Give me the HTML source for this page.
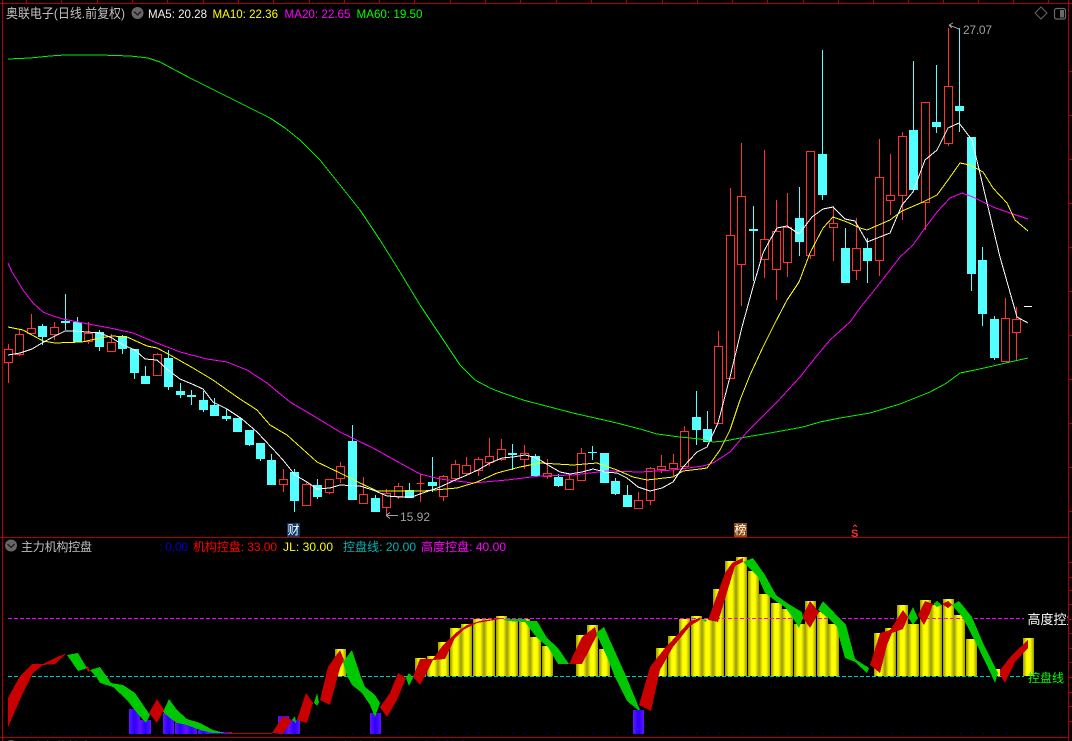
<!DOCTYPE html>
<html><head><meta charset="utf-8"><style>
html,body{margin:0;padding:0;background:#000;width:1072px;height:741px;overflow:hidden}
svg{display:block}
text{font-family:"Liberation Sans","Noto Sans CJK SC",sans-serif;font-size:12px}
</style></head><body>
<svg width="1072" height="741" viewBox="0 0 1072 741" xmlns="http://www.w3.org/2000/svg">
<defs>
<linearGradient id="y"><stop offset="0" stop-color="#989800"/><stop offset=".35" stop-color="#ff0"/><stop offset=".65" stop-color="#ff0"/><stop offset="1" stop-color="#989800"/></linearGradient>
<linearGradient id="b"><stop offset="0" stop-color="#6414ff"/><stop offset=".5" stop-color="#2800ff"/><stop offset="1" stop-color="#6414ff"/></linearGradient>
<clipPath id="rc"><rect x="0" y="600" width="1068" height="40"/></clipPath>
</defs>
<g shape-rendering="crispEdges">
<!-- frame -->
<path fill="none" stroke="#b00000" d="M2.5 0V741M0 3.5H1072M1068.5 0V741M0 537.5H1068M0 737.5H1068"/>
<path fill="none" stroke="#b00000" d="M26.5 0V3M61.5 0V3M97.5 0V3M132.5 0V3M167.5 0V3M203.5 0V3M238.5 0V3M273.5 0V3M309.5 0V3M344.5 0V3M379.5 0V3M414.5 0V3M450.5 0V3M485.5 0V3M520.5 0V3M556.5 0V3M591.5 0V3M626.5 0V3M662.5 0V3M697.5 0V3M732.5 0V3M767.5 0V3M803.5 0V3M838.5 0V3M873.5 0V3M908.5 0V3M943.5 0V3M978.5 0V3M1013.5 0V3M1048.5 0V3"/>
<path fill="none" stroke="#b00000" d="M1069 71.5h3M1069 115.5h3M1069 159.5h3M1069 203.5h3M1069 247.5h3M1069 291.5h3M1069 335.5h3M1069 379.5h3M1069 423.5h3M1069 467.5h3M1069 511.5h3M1069 562.5h3M1069 577.5h3M1069 590.5h3M1069 604.5h3M1069 619.5h3M1069 633.5h3M1069 648.5h3M1069 662.5h3M1069 677.5h3M1069 692.5h3M1069 706.5h3M1069 721.5h3"/>

<!-- candle wicks -->
<path fill="none" stroke="#ff3232" d="M8.5 344V383M19.5 329V356M31.5 314V335M54.5 322V340M88.5 322V344M111.5 334V351M157.5 353V375M283.5 469V492M306.5 482V506M329.5 479V494M340.5 462V483M363.5 477V503M386.5 489V515M398.5 483V499M420.5 474V502M443.5 475V501M455.5 460V481M466.5 457V476M478.5 457V476M489.5 438V466M501.5 439V461M524.5 445V469M547.5 459V479M569.5 474V490M581.5 448V480M638.5 492V508M650.5 467V505M661.5 455V473M673.5 454V476M684.5 426V466M718.5 331V423M730.5 188V378M741.5 143V306M764.5 150V278M776.5 200V300M787.5 193V277M810.5 151V259M833.5 206V261M856.5 218V280M879.5 139V276M890.5 154V215M902.5 132V220M925.5 102V230M948.5 28V146M1005.5 298V361M1016.5 307V361"/>
<path fill="none" stroke="#54ffff" d="M42.5 324V345M65.5 294V330M77.5 317V342M99.5 330V351M122.5 335V354M134.5 349V379M145.5 366V384M168.5 350V390M180.5 383V398M191.5 390V405M203.5 391V412M214.5 398V416M226.5 409V421M237.5 418V432M249.5 430V446M260.5 443V461M271.5 454V485M294.5 469V512M317.5 479V499M352.5 425V500M375.5 495V512M409.5 483V498M432.5 457V492M512.5 444V470M535.5 454V476M558.5 474V487M592.5 446V460M604.5 453V483M615.5 478V495M627.5 485V507M696.5 391V445M707.5 411V442M753.5 206V281M799.5 187V256M822.5 50V200M845.5 228V283M867.5 238V283M913.5 61V190M936.5 65V133M959.5 28V132M971.5 137V291M982.5 247V326M994.5 316V360"/>
<!-- red bodies -->
<path fill="#000" stroke="#ff3232" d="M4.5 349.5h8v13h-8zM15.5 334.5h8v20h-8zM27.5 328.5h8v5h-8zM50.5 327.5h8v7h-8zM84.5 333.5h8v8h-8zM107.5 342.5h8v9h-8zM153.5 354.5h8v21h-8zM279.5 479.5h8v5h-8zM302.5 484.5h8v21h-8zM325.5 479.5h8v13h-8zM336.5 466.5h8v12h-8zM359.5 494.5h8v9h-8zM382.5 493.5h8v14h-8zM394.5 486.5h8v10h-8zM416.5 483.5h8v0h-8zM439.5 476.5h8v20h-8zM451.5 464.5h8v14h-8zM462.5 465.5h8v8h-8zM474.5 459.5h8v11h-8zM485.5 456.5h8v6h-8zM497.5 449.5h8v10h-8zM520.5 453.5h8v6h-8zM543.5 473.5h8v3h-8zM565.5 479.5h8v10h-8zM577.5 453.5h8v27h-8zM634.5 500.5h8v8h-8zM646.5 468.5h8v32h-8zM657.5 466.5h8v3h-8zM669.5 463.5h8v5h-8zM680.5 431.5h8v35h-8zM714.5 346.5h8v77h-8zM726.5 235.5h8v143h-8zM737.5 196.5h8v68h-8zM760.5 239.5h8v20h-8zM772.5 231.5h8v38h-8zM783.5 227.5h8v35h-8zM806.5 151.5h8v104h-8zM829.5 223.5h8v4h-8zM852.5 248.5h8v22h-8zM875.5 177.5h8v83h-8zM886.5 195.5h8v5h-8zM898.5 136.5h8v59h-8zM921.5 102.5h8v100h-8zM944.5 86.5h8v57h-8zM1001.5 318.5h8v43h-8zM1012.5 319.5h8v13h-8z"/>
<!-- cyan bodies -->
<path fill="#54ffff" d="M38 326h9V337h-9zM61 321h9V323h-9zM73 322h9V342h-9zM95 332h9V347h-9zM118 336h9V349h-9zM130 349h9V373h-9zM141 376h9V384h-9zM164 358h9V387h-9zM176 391h9V395h-9zM187 395h9V397h-9zM199 400h9V410h-9zM210 405h9V416h-9zM222 416h9V419h-9zM233 418h9V432h-9zM245 430h9V445h-9zM256 443h9V459h-9zM267 460h9V485h-9zM290 472h9V501h-9zM313 485h9V497h-9zM348 441h9V500h-9zM371 498h9V512h-9zM405 490h9V498h-9zM428 482h9V486h-9zM508 453h9V455h-9zM531 456h9V476h-9zM554 477h9V486h-9zM588 452h9V453h-9zM600 453h9V483h-9zM611 481h9V494h-9zM623 495h9V507h-9zM692 417h9V430h-9zM703 429h9V442h-9zM749 229h9V231h-9zM795 218h9V242h-9zM818 154h9V195h-9zM841 248h9V283h-9zM863 248h9V261h-9zM909 130h9V190h-9zM932 122h9V127h-9zM955 106h9V111h-9zM967 137h9V274h-9zM978 260h9V314h-9zM990 319h9V358h-9z"/>
<!-- moving averages -->
<polyline fill="none" stroke="#00f000" points="8,59 30,58 50,56 65,55 100,55 130,56 148,58 160,62 175,70 190,78 220,93 250,108 270,118 285,128 300,140 320,160 340,185 360,210 380,240 400,272 420,305 440,335 460,365 475,380 490,388 500,392 523,400 573,413 617,423 640,429 657,434 680,437 700,439 713,442 725,441 740,438 770,433 803,427 820,422 840,418 870,413 900,404 915,398 930,392 945,384 952,379 960,373 975,370 993,366 1010,362 1028,358"/>
<polyline fill="none" stroke="#ff00ff" points="8,263 12,272 17,280 23,290 33,303 43,312 53,316 63,319 83,323 110,328 133,333 157,343 180,352 207,359 227,362 247,370 267,383 290,402 317,418 340,432 373,448 400,463 420,474 440,479 473,483 507,480 540,476 573,475 607,471 640,472 673,470 703,466 713,463 730,452 747,432 762,417 777,402 800,377 815,358 830,340 850,322 860,308 880,283 900,257 913,245 925,228 937,212 950,198 962,193 973,197 993,207 1010,213 1028,219"/>
<polyline fill="none" stroke="#ffff00" points="8,327 23,330 43,341 55,343 82,342 100,338 112,336 127,337 147,346 157,348 170,355 193,368 213,380 237,397 257,410 270,425 287,435 317,462 340,473 360,483 377,491 400,491 423,491 457,488 477,482 497,473 520,467 540,463 573,465 597,463 617,470 633,477 647,480 673,477 683,471 700,469 707,468 720,450 730,430 740,400 750,375 763,347 775,323 787,300 799,282 810,253 823,228 833,217 847,222 860,228 867,230 890,220 902,211 923,202 937,195 948,180 960,163 970,165 983,172 993,188 1007,203 1015,220 1028,231"/>
<polyline fill="none" stroke="#ffffff" points="8,355 20,353 32,349 42,343 53,337 65,331 72,331 87,332 100,333 112,338 123,345 135,350 145,359 157,360 168,370 180,379 192,384 203,389 213,402 227,409 242,419 257,432 272,448 283,460 295,475 307,482 317,489 330,488 340,485 360,486 373,490 387,496 400,497 412,497 420,494 440,487 453,481 467,475 478,470 490,463 502,458 513,457 525,455 537,458 548,465 560,472 570,474 582,472 593,469 605,472 617,473 627,478 638,487 650,491 662,488 673,482 683,467 697,452 707,447 718,423 730,377 742,327 753,287 763,253 770,240 777,228 787,226 799,234 812,217 823,209 833,207 845,219 855,221 867,242 890,233 902,205 913,192 925,160 937,150 948,128 959,123 972,140 988,207 1000,257 1017,317 1028,323"/>
<path fill="none" stroke="#fff" d="M1024 306.5h8"/>
<!-- annotations -->
<path fill="none" stroke="#a0a0a0" d="M949 25L959 29V30M949 25l4-2M949 25l3 3M386 515.5h12M386 515.5l4-3M386 515.5l4 3"/>

<!-- badges -->
<rect x="287" y="523" width="13" height="14" fill="#0b3a6a"/>
<rect x="734" y="523" width="13" height="14" fill="#8a4a10"/>
<path fill="none" stroke="#ff3030" d="M853 527l2-2 2 2"/>

<!-- yellow bars -->
<g fill="url(#y)">
<rect x="335" y="649" width="11" height="27"/>
<rect x="415" y="658" width="11" height="18"/><rect x="427" y="656" width="11" height="20"/><rect x="438" y="642" width="11" height="34"/><rect x="450" y="628" width="11" height="48"/><rect x="461" y="624" width="11" height="52"/><rect x="473" y="619" width="11" height="57"/><rect x="484" y="619" width="11" height="57"/><rect x="496" y="616" width="11" height="60"/><rect x="507" y="619" width="11" height="57"/><rect x="519" y="619" width="11" height="57"/><rect x="530" y="637" width="11" height="39"/><rect x="542" y="646" width="11" height="30"/>
<rect x="576" y="635" width="11" height="41"/><rect x="587" y="625" width="11" height="51"/><rect x="599" y="649" width="11" height="27"/>
<rect x="656" y="648" width="11" height="28"/><rect x="668" y="636" width="11" height="40"/><rect x="679" y="619" width="11" height="57"/><rect x="691" y="616" width="11" height="60"/><rect x="702" y="619" width="11" height="57"/><rect x="713" y="589" width="11" height="87"/><rect x="725" y="561" width="11" height="115"/><rect x="736" y="557" width="11" height="119"/><rect x="748" y="571" width="11" height="105"/><rect x="759" y="594" width="11" height="82"/><rect x="771" y="603" width="11" height="73"/><rect x="782" y="609" width="11" height="67"/><rect x="794" y="624" width="11" height="52"/><rect x="805" y="601" width="11" height="75"/><rect x="817" y="612" width="11" height="64"/><rect x="828" y="624" width="11" height="52"/>
<rect x="874" y="633" width="11" height="43"/><rect x="885" y="628" width="11" height="48"/><rect x="897" y="605" width="11" height="71"/><rect x="908" y="624" width="11" height="52"/><rect x="920" y="600" width="11" height="76"/><rect x="931" y="605" width="11" height="71"/><rect x="943" y="599" width="11" height="77"/><rect x="954" y="615" width="11" height="61"/><rect x="966" y="639" width="11" height="37"/>
<rect x="995" y="669" width="5" height="7" fill="#ff0"/><rect x="1023" y="638" width="11" height="38"/>
</g>
<!-- blue bars -->
<g fill="url(#b)">
<rect x="129" y="709" width="11" height="25"/><rect x="140" y="720" width="11" height="14"/><rect x="163" y="713" width="11" height="21"/><rect x="175" y="722" width="11" height="12"/><rect x="186" y="725" width="11" height="9"/><rect x="198" y="730" width="11" height="4"/><rect x="209" y="732" width="11" height="2"/><rect x="221" y="732" width="11" height="2"/><rect x="232" y="733" width="11" height="1"/><rect x="244" y="733" width="11" height="1"/><rect x="255" y="733" width="11" height="1"/><rect x="278" y="716" width="11" height="18"/><rect x="289" y="720" width="11" height="14"/><rect x="370" y="713" width="11" height="21"/><rect x="633" y="710" width="11" height="24"/>
</g>
<path fill="none" stroke="#0000c8" stroke-dasharray="1 10.47" d="M8 733.5H1024"/>
<path fill="none" stroke="#ff00ff" stroke-dasharray="4 2" d="M8 618.5H1024"/>
<path fill="none" stroke="#00c8c8" stroke-dasharray="4 2" d="M8 676.5H1024"/>

<!-- red bands -->
<g fill="#c80000">
<polygon points="8,698 20,676 32,664 43,664 55,658 67,653 55,664 43,665 33,673 23,693 8,727"/>
<polygon points="86,667 88,666 90,671 88,672"/>
<polygon points="149,713 157,699 164,710 157,723"/>
<polygon points="225,733 272,733 272,734 225,734"/>
<polygon points="272,733 283,716 292,720 283,734"/>
<polygon points="297,720 306,693 313,703 307,723"/>
<polygon points="320,700 328,667 340,650 344,660 340,668 330,705"/>
<polygon points="380,707 390,693 398,673 406,678 397,700 387,717"/>
<polygon points="413,677 420,659 433,659 443,645 457,632 467,625 480,621 500,618 500,619 477,623 463,630 455,638 445,659 433,660 425,676 420,685"/>
<polygon points="569,664 582,637 595,627 597,635 582,664"/>
<polygon points="639,705 650,667 665,648 680,632 690,621 700,618 700,620 690,626 673,647 660,670 651,711"/>
<polygon points="708,620 725,573 732,563 743,558 743,562 735,566 718,622"/>
<polygon points="803,615 810,601 819,612 810,628 803,618"/>
<polygon points="870,665 880,633 890,630 903,610 908,617 903,629 892,633 887,645 880,673"/>
<polygon points="918,615 925,601 933,604 930,613 924,625"/>
<polygon points="942,604 948,601 952,605 948,608"/>
<polygon points="1000,670 1012,655 1028,640 1028,648 1015,662 1005,683 1000,675"/>
</g>
<!-- green bands -->
<g fill="#00c800">
<polygon points="67,655 78,653 87,668 78,671"/>
<polygon points="90,670 100,667 107,677 111,683 123,685 135,693 150,715 146,723 137,713 127,700 113,687 100,683 97,678"/>
<polygon points="163,712 169,699 177,710 187,719 200,723 213,730 225,733 213,733 200,730 187,725 177,723 170,718"/>
<polygon points="292,720 295,716 296,723"/>
<polygon points="314,703 317,693 319,702 317,706"/>
<polygon points="343,662 352,650 361,677 365,687 375,695 380,703 375,717 370,705 362,693 352,685 347,676"/>
<polygon points="406,678 409,673 413,678 409,686"/>
<polygon points="503,619 525,619 527,621 537,621 547,638 558,648 569,664 558,664 548,647 537,638 525,622 507,621"/>
<polygon points="596,633 604,627 613,647 626,676 640,710 638,710 627,701 615,677 607,657"/>
<polygon points="702,619 707,620 705,622"/>
<polygon points="743,562 753,558 765,575 776,595 787,603 802,612 803,618 799,628 793,618 785,607 777,602 765,593 758,577"/>
<polygon points="818,610 823,601 846,625 855,659 869,668 867,673 855,662 845,658 840,640 837,627 828,618"/>
<polygon points="908,617 913,607 918,618 913,625"/>
<polygon points="933,604 937,601 942,605 937,607"/>
<polygon points="952,605 959,601 972,617 983,643 998,673 995,683 992,676 977,645 963,618"/>
</g>
</g>

<!-- small icons -->
<circle cx="137.5" cy="13" r="6" fill="#666"/>
<path d="M134 11.5l3.5 3.5 3.5-3.5" fill="none" stroke="#1c1c1c" stroke-width="1.3"/>
<circle cx="11" cy="545.5" r="6" fill="#666"/>
<path d="M7.5 544l3.5 3.5 3.5-3.5" fill="none" stroke="#1c1c1c" stroke-width="1.3"/>
<circle cx="11" cy="746" r="6" fill="#666"/>
<path d="M1041 7l6 6-6 6-6-6z" fill="none" stroke="#666"/>
<rect x="1054.5" y="8.5" width="11" height="10.5" rx="2" fill="none" stroke="#6a6a6a" stroke-width="1.2"/>
<rect x="1060" y="10" width="4" height="7.5" fill="#6a6a6a"/>

<!-- header texts -->
<text x="6" y="18" style="font-size:13px" fill="#c0c0c0" textLength="119" lengthAdjust="spacingAndGlyphs">奥联电子(日线.前复权)</text>
<text x="148" y="18" fill="#f0f0f0" textLength="59" lengthAdjust="spacingAndGlyphs">MA5: 20.28</text>
<text x="212.5" y="18" fill="#ffff00" textLength="65.5" lengthAdjust="spacingAndGlyphs">MA10: 22.36</text>
<text x="284.5" y="18" fill="#ff00ff" textLength="66" lengthAdjust="spacingAndGlyphs">MA20: 22.65</text>
<text x="356.5" y="18" fill="#00ff00" textLength="66" lengthAdjust="spacingAndGlyphs">MA60: 19.50</text>

<text x="963" y="34" fill="#a0a0a0" textLength="29">27.07</text>
<text x="400" y="521" fill="#a0a0a0" textLength="30">15.92</text>
<text x="287.5" y="534" fill="#fff" style="font-size:12px">财</text>
<text x="734.5" y="534" fill="#fff" style="font-size:12px">榜</text>
<text x="851" y="537" fill="#ff3030" style="font-size:11px;font-weight:bold">S</text>

<!-- sub header -->
<text x="21" y="551" fill="#c0c0c0" textLength="71">主力机构控盘</text>
<text x="159" y="551" fill="#0000d0" textLength="29">: 0.00</text>
<text x="193" y="551" fill="#ff0000" textLength="84">机构控盘: 33.00</text>
<text x="283" y="551" fill="#ffff00" textLength="50">JL: 30.00</text>
<text x="343" y="551" fill="#00b4b4" textLength="73">控盘线: 20.00</text>
<text x="421" y="551" fill="#ff00ff" textLength="85">高度控盘: 40.00</text>

<g clip-path="url(#rc)"><text x="1027.5" y="624" fill="#fff" style="font-size:13px">高度控盘</text></g>
<text x="1028" y="682" fill="#00ff00" textLength="36">控盘线</text>

<!-- third panel clipped header -->
<text x="21" y="751" fill="#c0c0c0" textLength="71">主力机构控盘</text>
<text x="193" y="751" fill="#ff0000" textLength="44">机构控盘</text>
<text x="343" y="751" fill="#00b4b4" textLength="36">控盘线</text>
<text x="421" y="751" fill="#ff00ff" textLength="48">高度控盘</text>
</svg>
</body></html>
